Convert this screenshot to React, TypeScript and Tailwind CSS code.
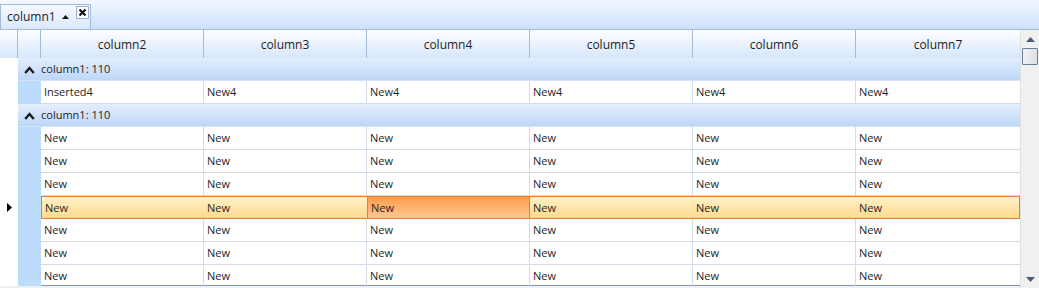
import React from "react";

const cols = ["column2", "column3", "column4", "column5", "column6", "column7"];
const colW = "grid-cols-[18px_23px_163px_163px_163px_163px_163px_164px]";

function Caret() {
  return (
    <svg width="11" height="8" viewBox="0 0 11 8" className="block">
      <path d="M1.2 7 L5.5 2 L9.8 7" fill="none" stroke="#1a1a1a" strokeWidth="2.4" />
    </svg>
  );
}

function GroupRow() {
  return (
    <div className={`grid ${colW} h-[23px]`}>
      <div className="bg-white" />
      <div className="col-span-7 flex items-center pt-[1px] bg-gradient-to-b from-[#e4eefc] to-[#bdd7f8] border-b border-[#d5e3f5]">
        <div className="w-[23px] flex justify-center">
          <Caret />
        </div>
        <span className="text-[11px] text-[#1e1e1e]">column1: 110</span>
      </div>
    </div>
  );
}

function DataRow({ first, rest, selected, last }: { first: string; rest: string; selected?: boolean; last?: boolean }) {
  const h = last ? "h-[21px] pt-[3px]" : "h-[23px] pt-[1px]";
  return (
    <div className={`grid ${colW} ${last ? "h-[21px]" : "h-[23px]"}`}>
      <div className="bg-white flex items-center justify-center">
        {selected && (
          <svg width="5" height="9" viewBox="0 0 5 9">
            <path d="M0 0 L5 4.5 L0 9 Z" fill="#000" />
          </svg>
        )}
      </div>
      <div className="bg-[#bcdcfc]" />
      {cols.map((c, i) => {
        const text = i === 0 ? first : rest;
        if (selected) {
          const cur = i === 2;
          return (
            <div
              key={c}
              className={`flex items-center pl-[3px] pt-[1px] text-[11px] text-[#1e1e1e] border-y border-[#e0803a] ${i === 0 ? "border-l" : ""} ${i === 5 ? "border-r" : ""} ${cur ? "bg-gradient-to-b from-[#fd9b48] to-[#ffc792] border-x border-[#e0803a]" : "bg-gradient-to-b from-[#fff1c6] to-[#fdd98e]"}`}
            >
              {text}
            </div>
          );
        }
        return (
          <div
            key={c}
            className={`flex items-center pl-[3px] ${h} text-[11px] text-[#1e1e1e] bg-white border-b ${last ? "border-[#7d96b9]" : "border-[#d3dbe8]"} ${i < 5 ? "border-r border-r-[#d3dbe8]" : ""}`}
          >
            {text}
          </div>
        );
      })}
    </div>
  );
}

export default function App() {
  return (
    <div className="w-[1039px] h-[288px] overflow-hidden bg-white flex flex-col" style={{ fontFamily: '"Open Sans", "Liberation Sans", sans-serif' }}>
      {/* group-by panel */}
      <div className="h-[30px] shrink-0 bg-gradient-to-b from-[#f3f8ff] to-[#cde0fb] flex items-end border-b border-[#a3bbd8]">
        <div className="h-[25px] w-[91px] border border-b-0 border-[#a3bbd8] bg-gradient-to-b from-[#f6f9fe] to-[#dae8fc] flex items-start">
          <div className="flex items-center h-[24px] pl-[6px] text-[12px] text-[#1e1e1e]">
            column1
            <svg width="7" height="4" viewBox="0 0 7 4" className="ml-[6px]">
              <path d="M0 4 L3.5 0 L7 4 Z" fill="#111" />
            </svg>
          </div>
          <div className="ml-auto mr-[1px] mt-[1px] w-[13px] h-[13px] border border-[#9bb0cc] bg-white flex items-center justify-center">
            <svg width="9" height="9" viewBox="0 0 9 9">
              <path d="M1.5 1.5 L7.5 7.5 M7.5 1.5 L1.5 7.5" stroke="#111" strokeWidth="2.2" />
            </svg>
          </div>
        </div>
      </div>

      <div className="flex flex-1 min-h-0">
        <div className="w-[1020px] flex flex-col">
          {/* header */}
          <div className={`grid ${colW} h-[28px] shrink-0 bg-gradient-to-b from-[#fdfeff] via-[#eaf2fe] to-[#d6e6fc]`}>
            <div className="border-r border-[#a3bbd8]" />
            <div className="border-r border-[#a3bbd8]" />
            {cols.map((c, i) => (
              <div key={c} className={`flex items-center justify-center pt-[2px] text-[12px] text-[#1e1e1e] ${i < 5 ? "border-r border-[#a3bbd8]" : ""}`}>
                {c}
              </div>
            ))}
          </div>
          <GroupRow />
          <DataRow first="Inserted4" rest="New4" />
          <GroupRow />
          <DataRow first="New" rest="New" />
          <DataRow first="New" rest="New" />
          <DataRow first="New" rest="New" />
          <DataRow first="New" rest="New" selected />
          <DataRow first="New" rest="New" />
          <DataRow first="New" rest="New" />
          <DataRow first="New" rest="New" last />
          <div className="flex-1 bg-[#f0f0f0]" />
        </div>

        {/* vertical scrollbar */}
        <div className="w-[19px] bg-[#f0f0f0] border-l border-[#e2e2e2] flex flex-col items-center">
          <div className="h-[18px] flex items-center justify-center">
            <svg width="9" height="5" viewBox="0 0 9 5">
              <path d="M0 5 L4.5 0 L9 5 Z" fill="#4d5d78" />
            </svg>
          </div>
          <div className="w-[16px] h-[17px] border border-[#6a7ea0] rounded-[1px] bg-gradient-to-r from-[#f2f2f2] via-[#e6e8ec] to-[#dde1e6]" />
          <div className="flex-1" />
          <div className="h-[18px] flex items-center justify-center">
            <svg width="9" height="5" viewBox="0 0 9 5">
              <path d="M0 0 L4.5 5 L9 0 Z" fill="#4d5d78" />
            </svg>
          </div>
        </div>
      </div>
    </div>
  );
}
